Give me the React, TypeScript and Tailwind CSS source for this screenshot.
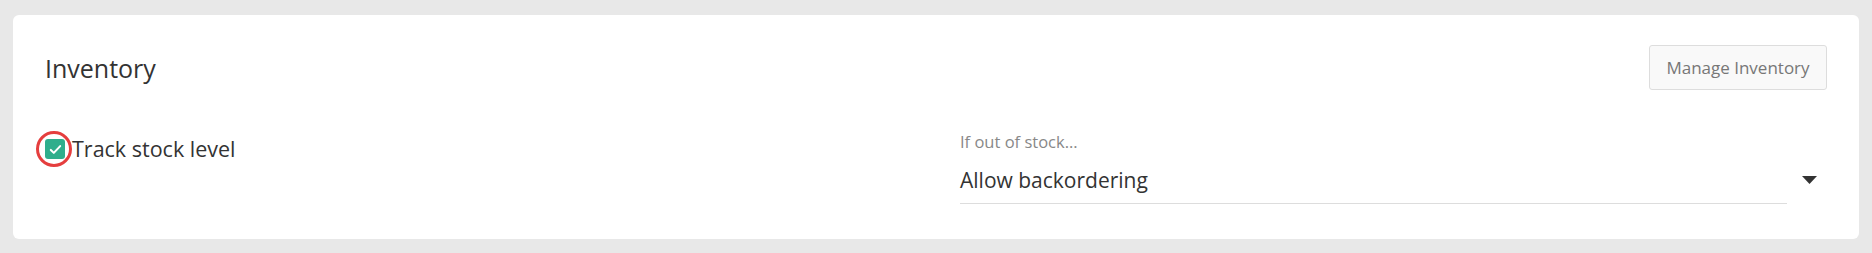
export default function App() {
  return (
    <div className="min-h-[253px] w-full bg-[#e8e8e8] px-[13px] pt-[15px] pb-[14px] font-['Open_Sans',sans-serif]">
      <div className="h-[224px] rounded-[6px] bg-white px-[32px] pt-[30px]">
        <div className="flex items-center justify-between">
          <h2 className="text-[25px] leading-[32px] text-[#333]">Inventory</h2>
          <button
            type="button"
            className="h-[45px] w-[178px] rounded-[3px] border border-[#ddd] bg-[#f9f9f9] text-[17px] text-[#777]"
          >
            Manage Inventory
          </button>
        </div>

        <div className="mt-[36px] grid grid-cols-2 gap-12">
          <label className="flex items-start gap-[7px] pt-[10px]">
            <span className="relative mt-[3px] flex h-[20px] w-[20px] shrink-0 items-center justify-center rounded-[3px] bg-[#2fae8c]">
              <svg viewBox="0 0 20 20" className="h-[17px] w-[17px]" fill="none">
                <path d="M4.5 10.5l3.5 3.5 7.5-8" stroke="#fff" strokeWidth="2.4" strokeLinecap="round" strokeLinejoin="round" />
              </svg>
              <span className="absolute -left-[9px] -top-[8px] h-[36px] w-[36px] rounded-full border-[3px] border-[#e53e3e]" />
            </span>
            <span className="text-[21.5px] leading-[26px] text-[#333]">Track stock level</span>
          </label>

          <div className="relative">
            <div className="mt-[6px] text-[16.5px] leading-[20px] text-[#888]">If out of stock...</div>
            <div className="mt-[14px] mr-[40px] border-b border-[#ddd] pb-[9px] text-[21px] leading-[28px] text-[#333]">
              Allow backordering
            </div>
            <svg
              viewBox="0 0 15 8"
              className="absolute right-[10px] top-[50px] h-[8px] w-[15px]"
            >
              <path d="M0 0h15L7.5 8z" fill="#333" />
            </svg>
          </div>
        </div>
      </div>
    </div>
  );
}
